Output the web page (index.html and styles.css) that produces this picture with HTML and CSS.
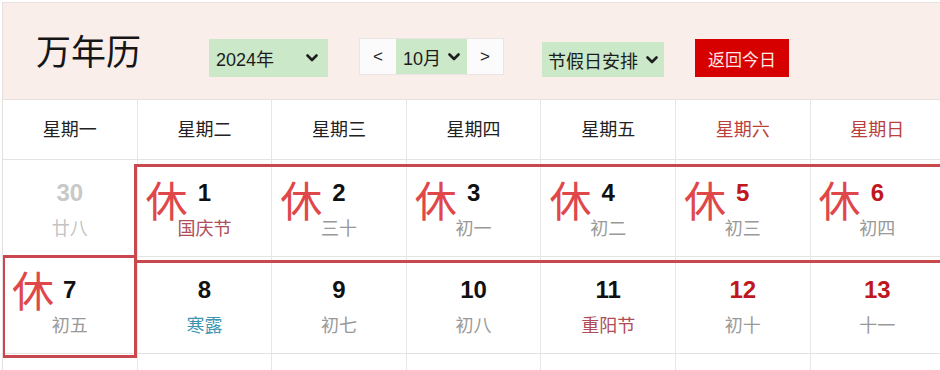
FILE: index.html
```html
<!DOCTYPE html>
<html lang="zh-CN">
<head>
<meta charset="utf-8">
<title>万年历</title>
<link rel="stylesheet" href="styles.css">
</head>
<body>
<div class="cal">
  <div class="head">
    <h1 class="title">万年历</h1>
    <div class="sel sel-year"><span>2024年</span><svg class="chev" viewBox="0 0 12 8" width="12" height="8"><polyline points="1.5,1.5 6,6 10.5,1.5"/></svg></div>
    <div class="month-group">
      <span class="nav nav-prev">&lt;</span>
      <div class="sel sel-month"><span>10月</span><svg class="chev" viewBox="0 0 12 8" width="12" height="8"><polyline points="1.5,1.5 6,6 10.5,1.5"/></svg></div>
      <span class="nav nav-next">&gt;</span>
    </div>
    <div class="sel sel-holiday"><span>节假日安排</span><svg class="chev" viewBox="0 0 12 8" width="12" height="8"><polyline points="1.5,1.5 6,6 10.5,1.5"/></svg></div>
    <button class="today">返回今日</button>
  </div>
  <div class="grid">
    <div class="wd">星期一</div>
    <div class="wd">星期二</div>
    <div class="wd">星期三</div>
    <div class="wd">星期四</div>
    <div class="wd">星期五</div>
    <div class="wd wd-end">星期六</div>
    <div class="wd wd-end">星期日</div>

    <div class="day day-other"><span class="num">30</span><span class="lunar">廿八</span></div>
    <div class="day"><span class="rest">休</span><span class="num">1</span><span class="lunar lunar-fest">国庆节</span></div>
    <div class="day"><span class="rest">休</span><span class="num">2</span><span class="lunar">三十</span></div>
    <div class="day"><span class="rest">休</span><span class="num">3</span><span class="lunar">初一</span></div>
    <div class="day"><span class="rest">休</span><span class="num">4</span><span class="lunar">初二</span></div>
    <div class="day day-end"><span class="rest">休</span><span class="num">5</span><span class="lunar">初三</span></div>
    <div class="day day-end"><span class="rest">休</span><span class="num">6</span><span class="lunar">初四</span></div>

    <div class="day"><span class="rest rest-high">休</span><span class="num">7</span><span class="lunar">初五</span></div>
    <div class="day"><span class="num">8</span><span class="lunar lunar-term">寒露</span></div>
    <div class="day"><span class="num">9</span><span class="lunar">初七</span></div>
    <div class="day"><span class="num">10</span><span class="lunar">初八</span></div>
    <div class="day"><span class="num">11</span><span class="lunar lunar-fest">重阳节</span></div>
    <div class="day day-end"><span class="num">12</span><span class="lunar">初十</span></div>
    <div class="day day-end"><span class="num">13</span><span class="lunar">十一</span></div>

    <div class="day"></div>
    <div class="day"></div>
    <div class="day"></div>
    <div class="day"></div>
    <div class="day"></div>
    <div class="day"></div>
    <div class="day"></div>
  </div>
  <div class="mark mark-week"></div>
  <div class="mark mark-mon"></div>
</div>
</body>
</html>
```
FILE: styles.css
```css
html, body {
  margin: 0;
  padding: 0;
  background: #ffffff;
  overflow: hidden;
}
body {
  width: 940px;
  height: 370px;
  font-family: "Noto Sans CJK SC", "Noto Sans", sans-serif;
  color: #1a1a1a;
}
.cal {
  position: relative;
  margin: 2px 0 0 2px;
  width: 960px;
  height: 368px;
  overflow: hidden;
  border-top: 1px solid #e9e2e2;
  border-left: 1px solid #e6e0e0;
  box-sizing: border-box;
}
.head {
  display: flex;
  align-items: flex-start;
  height: 96px;
  padding-left: 33px;
  background: #faeeea;
  border-bottom: 1px solid #eadfdd;
}
.title {
  margin: 27px 0 0 0;
  font-size: 35px;
  line-height: 40px;
  font-weight: 400;
  color: #161616;
  white-space: nowrap;
}
.sel {
  display: flex;
  align-items: center;
  justify-content: space-between;
  box-sizing: border-box;
  background: #cbe8c9;
  font-family: "Liberation Sans", "Noto Sans CJK SC", sans-serif;
  font-size: 18px;
  color: #1c1c1c;
  white-space: nowrap;
}
.chev {
  flex: none;
  fill: none;
  stroke: #1e1e1e;
  stroke-width: 2.6;
  stroke-linecap: round;
  stroke-linejoin: round;
}
.sel-year {
  margin: 36px 0 0 68px;
  width: 119px;
  height: 38px;
  padding: 0 10px 0 7px;
}
.month-group {
  display: flex;
  margin: 35px 0 0 31px;
  height: 37px;
  box-sizing: border-box;
  border: 1px solid #ebe4e4;
  background: #fbfbfb;
}
.nav {
  display: flex;
  align-items: center;
  justify-content: center;
  width: 36px;
  font-family: "Liberation Sans", sans-serif;
  font-size: 17px;
  color: #222;
}
.sel-month {
  width: 71px;
  height: 100%;
  padding: 0 7px 0 7px;
}
.sel-holiday {
  margin: 39px 0 0 38px;
  width: 122px;
  height: 35px;
  padding: 0 6px 0 6px;
}
.today {
  margin: 36px 0 0 31px;
  width: 94px;
  height: 38px;
  padding: 0;
  border: none;
  background: #d70000;
  color: #fde6e6;
  font-family: "Noto Sans CJK SC", sans-serif;
  font-size: 17px;
}
.grid {
  display: grid;
  grid-template-columns: repeat(7, 134.6px);
}
.wd {
  display: flex;
  align-items: center;
  justify-content: center;
  height: 60px;
  padding-bottom: 3px;
  box-sizing: border-box;
  border-right: 1px solid #e6e6e6;
  border-bottom: 1px solid #e3e3e3;
  font-size: 18px;
  color: #222;
  background: #fff;
}
.wd-end {
  color: #b9403d;
}
.day {
  position: relative;
  display: flex;
  flex-direction: column;
  align-items: center;
  height: 97px;
  box-sizing: border-box;
  padding-top: 19px;
  border-right: 1px solid #e6e6e6;
  border-bottom: 1px solid #e3e3e3;
}
.num {
  font-family: "Liberation Sans", Arial, sans-serif;
  font-weight: 700;
  font-size: 24px;
  line-height: 28px;
  color: #111;
}
.lunar {
  margin-top: 10px;
  font-size: 18px;
  line-height: 20px;
  color: #999;
}
.day-other .num {
  color: #c8c8c8;
}
.day-other .lunar {
  color: #c4c4c4;
}
.day-end .num {
  color: #bf1720;
}
.lunar-fest {
  color: #ae4d58;
}
.lunar-term {
  color: #3f96b3;
}
.rest {
  position: absolute;
  left: 8px;
  top: 18px;
  font-size: 42px;
  line-height: 42px;
  color: #e0474b;
}
.rest-high {
  left: 9px;
  top: 11px;
}
.mark {
  position: absolute;
  box-sizing: border-box;
  border: 3px solid #c9484e;
  pointer-events: none;
}
.mark-week {
  left: 131px;
  top: 161px;
  width: 900px;
  height: 99px;
}
.mark-mon {
  left: -1px;
  top: 252px;
  width: 135px;
  height: 103px;
}
```
